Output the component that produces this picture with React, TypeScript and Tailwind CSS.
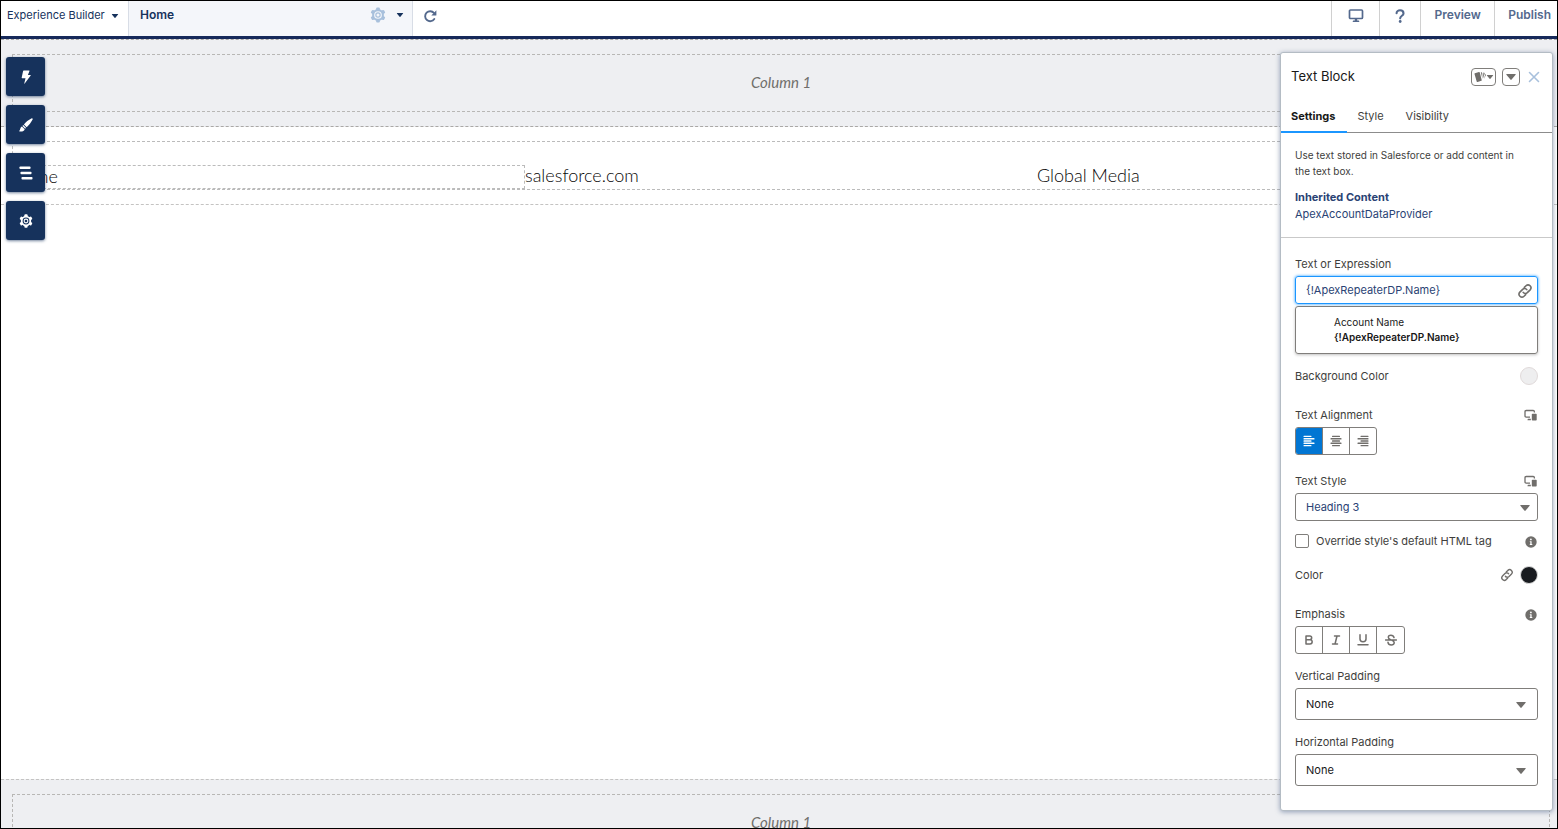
import React from "react";

type IconProps = { className?: string };

const Caret = ({ className = "" }: IconProps) => (
  <svg viewBox="0 0 10 6" className={className} fill="currentColor" aria-hidden="true">
    <path d="M0.8 0h8.4q.9 0 .4.8L5.6 5.6q-.6.7-1.2 0L.4.8Q0 0 .8 0z" />
  </svg>
);

const Gear = ({ className = "" }: IconProps) => (
  <svg viewBox="0 0 24 24" className={className} aria-hidden="true">
    <g fill="currentColor">
      <rect x="9.2" y="0.6" width="5.6" height="22.8" rx="1.6" />
      <rect x="9.2" y="0.6" width="5.6" height="22.8" rx="1.6" transform="rotate(60 12 12)" />
      <rect x="9.2" y="0.6" width="5.6" height="22.8" rx="1.6" transform="rotate(120 12 12)" />
    </g>
    <circle cx="12" cy="12" r="7.2" fill="none" stroke="currentColor" strokeWidth="3.4" />
    <circle cx="12" cy="12" r="5.8" className="fill-(--hole)" />
    <circle cx="12" cy="12" r="3.2" fill="none" stroke="currentColor" strokeWidth="1.8" />
  </svg>
);

const Bolt = () => (
  <svg viewBox="0 0 14 14" className="size-3.5" fill="currentColor" aria-hidden="true">
    <path d="M4.6.5h5.500q.6 0 .4.500L8.900 4.900h2.500q.7 0 .3.600L5.700 13.500q-.6.500-.4-.3L6.500 8.200H3.100q-.6 0-.4-.6L4.100.9q.1-.4.500-.4z" />
  </svg>
);

const Brush = () => (
  <svg viewBox="0 0 14 14" className="size-3.5" fill="currentColor" aria-hidden="true">
    <path d="M13.500.4q.5.500.1 1.200C12.200 4.300 9.900 7.400 7.700 9.200L4.900 6.400C6.700 4 9.600 1.700 12.300.4q.7-.4 1.200 0zM4.300 7.100l2.700 2.700-.8.900L3.400 7.900zM2.900 8.400l2.800 2.800C5.400 13 2.900 13.800.5 13.400q-.5-.2-.1-.6C1.400 11.800 1.100 9 2.900 8.400z" />
  </svg>
);

const Structure = () => (
  <svg viewBox="0 0 14 14" className="size-3.5" fill="currentColor" aria-hidden="true">
    <rect x="0.5" y="0.5" width="11" height="2.600" rx="0.800" />
    <rect x="1.500" y="5.700" width="11" height="2.600" rx="0.800" />
    <rect x="2.500" y="10.900" width="11" height="2.600" rx="0.800" />
  </svg>
);

const Refresh = () => (
  <svg viewBox="0 0 14 14" className="size-3.5" fill="none" aria-hidden="true">
    <path d="M11.300 10A5 5 0 1 1 11 4" stroke="currentColor" strokeWidth="1.900" strokeLinecap="round" />
    <path d="M13.400 1.200v4.700q0 .5-.5.500H8.300z" fill="currentColor" />
  </svg>
);

const Desktop = () => (
  <svg viewBox="0 0 16 15" className="h-4 w-4" aria-hidden="true">
    <rect x="1.500" y="1.500" width="13" height="8.500" rx="1" fill="none" stroke="currentColor" strokeWidth="1.700" />
    <path d="M6.800 10.500h2.400v1.600h1.600q.5.100.5 1.400H4.700q0-1.300.5-1.400h1.600z" fill="currentColor" />
  </svg>
);

const Question = () => (
  <svg viewBox="0 0 12 16" className="h-3.5 w-3" aria-hidden="true">
    <path d="M2.100 4.800C2.100.3 10 .3 10 5c0 2.800-3.800 2.700-3.800 5.700" fill="none" stroke="currentColor" strokeWidth="2.400" strokeLinecap="round" />
    <circle cx="6.200" cy="14.300" r="1.600" fill="currentColor" />
  </svg>
);

const LinkIcon = ({ className = "" }: IconProps) => (
  <svg viewBox="0 0 24 24" className={className} fill="none" stroke="currentColor" strokeWidth="2.400" strokeLinecap="round" aria-hidden="true">
    <path d="M11 6.600 13.500 4.100c4.200-3.800 10 2 6.200 6.200l-4.200 4.200c-1.900 1.800-4.800 1.600-6.200-.4" />
    <path d="M13 17.400 10.500 19.900c-4.200 3.800-10-2-6.200-6.200L8.500 9.500c1.900-1.800 4.800-1.600 6.200.4" />
  </svg>
);

const Devices = () => (
  <svg viewBox="0 0 13 12" className="mr-px h-3 w-[13px] text-[#706e6b]" aria-hidden="true">
    <path d="M6 8.100H2.200Q1 8.100 1 7V2.700Q1 1.500 2.200 1.500h7Q10.400 1.500 10.400 2.700V3.500" fill="none" stroke="currentColor" strokeWidth="1.300" />
    <path d="M4 9.800h2.800v1.500H3.500q0-1.300.5-1.500z" fill="currentColor" />
    <rect x="7.800" y="4.700" width="4.900" height="6.700" rx="0.700" fill="currentColor" />
  </svg>
);

const Info = ({ label }: { label: string }) => (
  <button type="button" aria-label={label} className="pt-0.5 pr-px text-[#706e6b]">
    <svg viewBox="0 0 12 12" className="size-3" aria-hidden="true">
      <circle cx="6" cy="6" r="5.700" fill="currentColor" />
      <circle cx="5.900" cy="3.400" r="0.900" fill="#fff" />
      <path d="M4.800 5.200h1.800v2.900h.7v.9H4.800v-.9h.5V6.100h-.5z" fill="#fff" />
    </svg>
  </button>
);

const AlignIcon = ({ kind }: { kind: "left" | "center" | "right" }) => {
  const widths = [8, 11, 8, 11, 8];
  return (
    <svg viewBox="0 0 12 12" className="size-3" fill="currentColor" aria-hidden="true">
      {widths.map((w, i) => (
        <rect key={i} x={kind === "left" ? 0.5 : kind === "right" ? 11.5 - w : 6 - w / 2} y={0.7 + i * 2.3} width={w} height="1.400" rx="0.500" />
      ))}
    </svg>
  );
};

const Swatches = () => (
  <svg viewBox="0 0 12 12" className="size-3" fill="currentColor" aria-hidden="true">
    <path d="M.9 2.200 5 1q.6-.1.800.4L7.700 9q.1.600-.4.800L3.600 11q-.6.200-.9-.5L.5 3q-.1-.6.400-.8zM6.800 1q1.500.1 1.500 1.400L8.400 7.800zM9.400 1.400q1.500.2 1.200 1.500L8.900 7.600zM11.500 2.900q.8.400.4 1.400L9.900 7.900z" />
  </svg>
);

const emphasis = [
  { name: "Bold", path: "M3 2h3.800C9.300 2 9.300 5.700 6.800 5.700H3M3 2v8h4C9.900 10 9.900 5.700 7 5.700" },
  { name: "Italic", path: "M4.500 2h5M2.500 10h5M7 2 5 10" },
  { name: "Underline", path: "M3 .8v4.200c0 3.600 6 3.600 6 0V.8M1 10.800h10" },
  { name: "Strikethrough", path: "M.5 6h11M9 3.500C8.300.3 3.300.5 3.300 3.200 3.300 4.800 4.800 5.500 6 6M3 8.300c.5 3.600 6.400 3.400 6.200.3C9.100 7.200 8 6.500 7 6.200" },
];

const ColumnPlaceholder = () => (
  <p className="pb-0.5 text-center font-[Lato,sans-serif] text-[15px] leading-[54px] text-[#706e6b] italic">Column 1</p>
);

const ToolButton = ({ label, children }: { label: string; children: React.ReactNode }) => (
  <button type="button" aria-label={label} className="flex size-[39px] items-center justify-center rounded-[3px] bg-[#16325c] text-white shadow-[0_1px_3px_#16325c99] [--hole:#16325c]">
    {children}
  </button>
);

const PaddingSelect = ({ id, label }: { id: string; label: string }) => (
  <div className="flex flex-col gap-1">
    <label htmlFor={id} className="leading-4">{label}</label>
    <div className="relative">
      <select id={id} className="h-8 w-full appearance-none rounded-[3px] border border-[#807e7b] bg-white px-2.5 text-[#181818]">
        <option>None</option>
        <option>Small</option>
        <option>Medium</option>
        <option>Large</option>
      </select>
      <Caret className="pointer-events-none absolute top-3.5 right-3 h-1.5 w-2.5 text-[#706e6b]" />
    </div>
  </div>
);

export default function App() {
  return (
    <div className="relative flex h-screen flex-col overflow-hidden border border-black bg-white font-[Inter,sans-serif] text-[11px] text-[#3e3e3c]">
      <header className="flex h-[38px] shrink-0 border-b-[3px] border-[#16295a] text-[#16325c]">
        <button type="button" className="flex w-32 items-center gap-1.5 border-r border-[#d8dde6] px-1.5 pb-1.5 whitespace-nowrap">
          Experience Builder
          <Caret className="h-1 w-2" />
        </button>
        <div className="flex w-71 items-center border-r border-[#d8dde6] bg-[#f4f6fa] pr-2 pb-2 pl-[11px]">
          <h1 className="flex-1 text-xs font-semibold">Home</h1>
          <button type="button" aria-label="Page settings" className="text-[#a8c0dc] [--hole:#f4f6fa]"><Gear className="size-4" /></button>
          <button type="button" aria-label="Page menu" className="pl-2.5"><Caret className="h-1 w-2" /></button>
        </div>
        <button type="button" aria-label="Refresh" className="px-2.5 pb-1.5 text-[#54698d]"><Refresh /></button>
        <div className="ml-auto flex text-xs font-semibold text-[#54698d]">
          <button type="button" aria-label="Desktop view" className="flex w-12 items-center justify-center border-l border-[#d0d0d0] pb-1.5"><Desktop /></button>
          <button type="button" aria-label="Help" className="flex w-[41px] items-center justify-center border-l border-[#d0d0d0] pb-1.5"><Question /></button>
          <button type="button" className="w-[74px] border-l border-[#d0d0d0] pb-2">Preview</button>
          <button type="button" className="border-l border-[#d0d0d0] pr-1.5 pb-2 pl-[13px]">Publish</button>
        </div>
      </header>

      <main className="flex min-h-0 flex-1 flex-col">
        <section className="border-y border-dashed border-[#aaa8a6] bg-[#eeeff2] py-3.5 pr-[7px] pl-[11px]">
          <div className="border border-dashed border-[#b8b7b5]"><ColumnPlaceholder /></div>
        </section>
        <section className="border-b border-dashed border-[#c4c3c2] py-3.5 pr-[7px] pl-[11px] font-[Lato,sans-serif] text-lg font-light text-[#080707]">
          <div className="grid grid-cols-3 border border-dashed border-[#bbb] pt-[23px] leading-5">
            <p className="border border-dashed border-[#bbb] pb-0.5">Acme</p>
            <p>salesforce.com</p>
            <p>Global Media</p>
          </div>
        </section>
        <div className="flex-1" />
        <section className="h-[49px] shrink-0 overflow-hidden border-t border-dashed border-[#c4c3c2] bg-[#eeeff2] pt-3.5 pr-[7px] pl-[11px]">
          <div className="border border-dashed border-[#b8b7b5]"><ColumnPlaceholder /></div>
        </section>
      </main>

      <nav aria-label="Builder tools" className="absolute top-14 left-[5px] flex flex-col gap-[9px]">
        <ToolButton label="Components"><Bolt /></ToolButton>
        <ToolButton label="Theme"><Brush /></ToolButton>
        <ToolButton label="Page structure"><Structure /></ToolButton>
        <ToolButton label="Settings"><Gear className="size-3.5" /></ToolButton>
      </nav>

      <aside aria-label="Text Block properties" className="absolute top-[51px] right-1 w-[273px] rounded-[3px] border border-[#b4bcc4] bg-white pb-6 shadow-[0_1px_5px_#54698d99]">
        <div className="flex h-12 items-center gap-1.5 px-2.5">
          <h2 className="flex-1 text-[13px] text-[#181818]">Text Block</h2>
          <button type="button" aria-label="Style presets" className="flex h-[18px] w-[25px] items-center justify-center rounded-[4px] border border-[#807e7b] text-[#706e6b]">
            <Swatches />
            <Caret className="h-1 w-2" />
          </button>
          <button type="button" aria-label="More actions" className="flex size-[18px] items-center justify-center rounded-[4px] border border-[#807e7b] text-[#706e6b]">
            <Caret className="h-1.5 w-2.5" />
          </button>
          <button type="button" aria-label="Close" className="px-0.5 text-[#a8c0dc]">
            <svg viewBox="0 0 12 12" className="size-3" stroke="currentColor" strokeWidth="1.600" strokeLinecap="round"><path d="m1.500 1.500 9 9m0-9-9 9" /></svg>
          </button>
        </div>
        <div role="tablist" className="flex h-8 border-b border-[#8c8c8c]">
          <button type="button" role="tab" aria-selected="true" className="-mb-px border-b-2 border-[#1b96ff] pr-3 pl-2.5 font-bold text-[#181818]">Settings</button>
          <button type="button" role="tab" aria-selected="false" className="pr-3 pl-2.5">Style</button>
          <button type="button" role="tab" aria-selected="false" className="pr-3 pl-2.5">Visibility</button>
        </div>
        <div className="border-b border-[#c9c9c9] px-3.5 py-3.5">
          <p className="pr-3 text-[10px] leading-4">Use text stored in Salesforce or add content in the text box.</p>
          <p className="mt-2.5 leading-[17px] font-bold text-[#2a4374]">Inherited Content</p>
          <a href="#provider" className="block leading-[17px] text-[#2a4374]">ApexAccountDataProvider</a>
        </div>
        <form className="flex flex-col px-3.5 pt-[18px]">
          <label htmlFor="expression" className="leading-4">Text or Expression</label>
          <div className="relative mt-1">
            <input id="expression" defaultValue="{!ApexRepeaterDP.Name}" className="h-7 w-full rounded-[3px] border border-[#1b96ff] px-2.5 pr-7 text-[#2a4374] shadow-[0_0_3px_#1b96ff] outline-none" />
            <button type="button" aria-label="Link data" className="absolute top-[7px] right-[5px] text-[#706e6b]"><LinkIcon className="size-4" /></button>
          </div>
          <div role="listbox" aria-label="Expressions" className="mt-0.5 rounded-[3px] border border-[#807e7b] py-2 pl-[38px] text-[10px] leading-[15px] text-[#181818] shadow-[0_1px_3px_#00000040]">
            <div role="option" aria-selected="false">
              <p>Account Name</p>
              <p className="font-semibold">{"{!ApexRepeaterDP.Name}"}</p>
            </div>
          </div>
          <div className="mt-[13px] flex items-center justify-between">
            <span>Background Color</span>
            <button type="button" aria-label="Background Color" className="size-[18px] rounded-full border border-[#e0dada] bg-[#eeeeef]" />
          </div>
          <div className="mt-[22px] flex items-center justify-between leading-4">
            <span>Text Alignment</span>
            <Devices />
          </div>
          <div role="group" aria-label="Text Alignment" className="mt-1 flex h-7 self-start overflow-hidden rounded-[3px] border border-[#807e7b] text-[#706e6b]">
            <button type="button" aria-label="Left" aria-pressed="true" className="flex w-[26px] items-center justify-center bg-[#0176d3] text-white"><AlignIcon kind="left" /></button>
            <button type="button" aria-label="Center" className="flex w-[27px] items-center justify-center border-l border-[#807e7b]"><AlignIcon kind="center" /></button>
            <button type="button" aria-label="Right" className="flex w-[27px] items-center justify-center border-l border-[#807e7b]"><AlignIcon kind="right" /></button>
          </div>
          <div className="mt-[18px] flex items-center justify-between leading-4">
            <label htmlFor="text-style">Text Style</label>
            <Devices />
          </div>
          <div className="relative mt-1">
            <select id="text-style" defaultValue="Heading 3" className="h-7 w-full appearance-none rounded-[3px] border border-[#807e7b] bg-white px-2.5 text-[#2a4374]">
              <option>Heading 1</option>
              <option>Heading 2</option>
              <option>Heading 3</option>
            </select>
            <Caret className="pointer-events-none absolute top-3 right-2 h-1.5 w-2.5 text-[#706e6b]" />
          </div>
          <div className="mt-3 flex items-center justify-between leading-4">
            <label className="flex items-center gap-[7px]">
              <input type="checkbox" className="size-3.5 appearance-none rounded-[2px] border border-[#807e7b] checked:bg-[#0176d3]" />
              Override style's default HTML tag
            </label>
            <Info label="About the HTML tag" />
          </div>
          <div className="mt-[17px] flex items-center gap-1.5">
            <span className="flex-1">Color</span>
            <LinkIcon className="size-3.5 text-[#706e6b]" />
            <button type="button" aria-label="Color" className="size-[18px] rounded-full border border-[#ddd] bg-[#181b1f]" />
          </div>
          <div className="mt-[22px] flex items-center justify-between leading-4">
            <span>Emphasis</span>
            <Info label="About emphasis" />
          </div>
          <div role="group" aria-label="Emphasis" className="mt-1 flex h-7 divide-x divide-[#807e7b] self-start rounded-[3px] border border-[#807e7b] text-[#706e6b]">
            {emphasis.map((item) => (
              <button key={item.name} type="button" aria-label={item.name} className="flex w-[27px] items-center justify-center">
                <svg viewBox="0 0 12 12" className="size-3" fill="none" stroke="currentColor" strokeWidth="1.500" strokeLinecap="round" strokeLinejoin="round" aria-hidden="true"><path d={item.path} /></svg>
              </button>
            ))}
          </div>
          <div className="mt-3.5 flex flex-col gap-3.5">
            <PaddingSelect id="vertical-padding" label="Vertical Padding" />
            <PaddingSelect id="horizontal-padding" label="Horizontal Padding" />
          </div>
        </form>
      </aside>
    </div>
  );
}
